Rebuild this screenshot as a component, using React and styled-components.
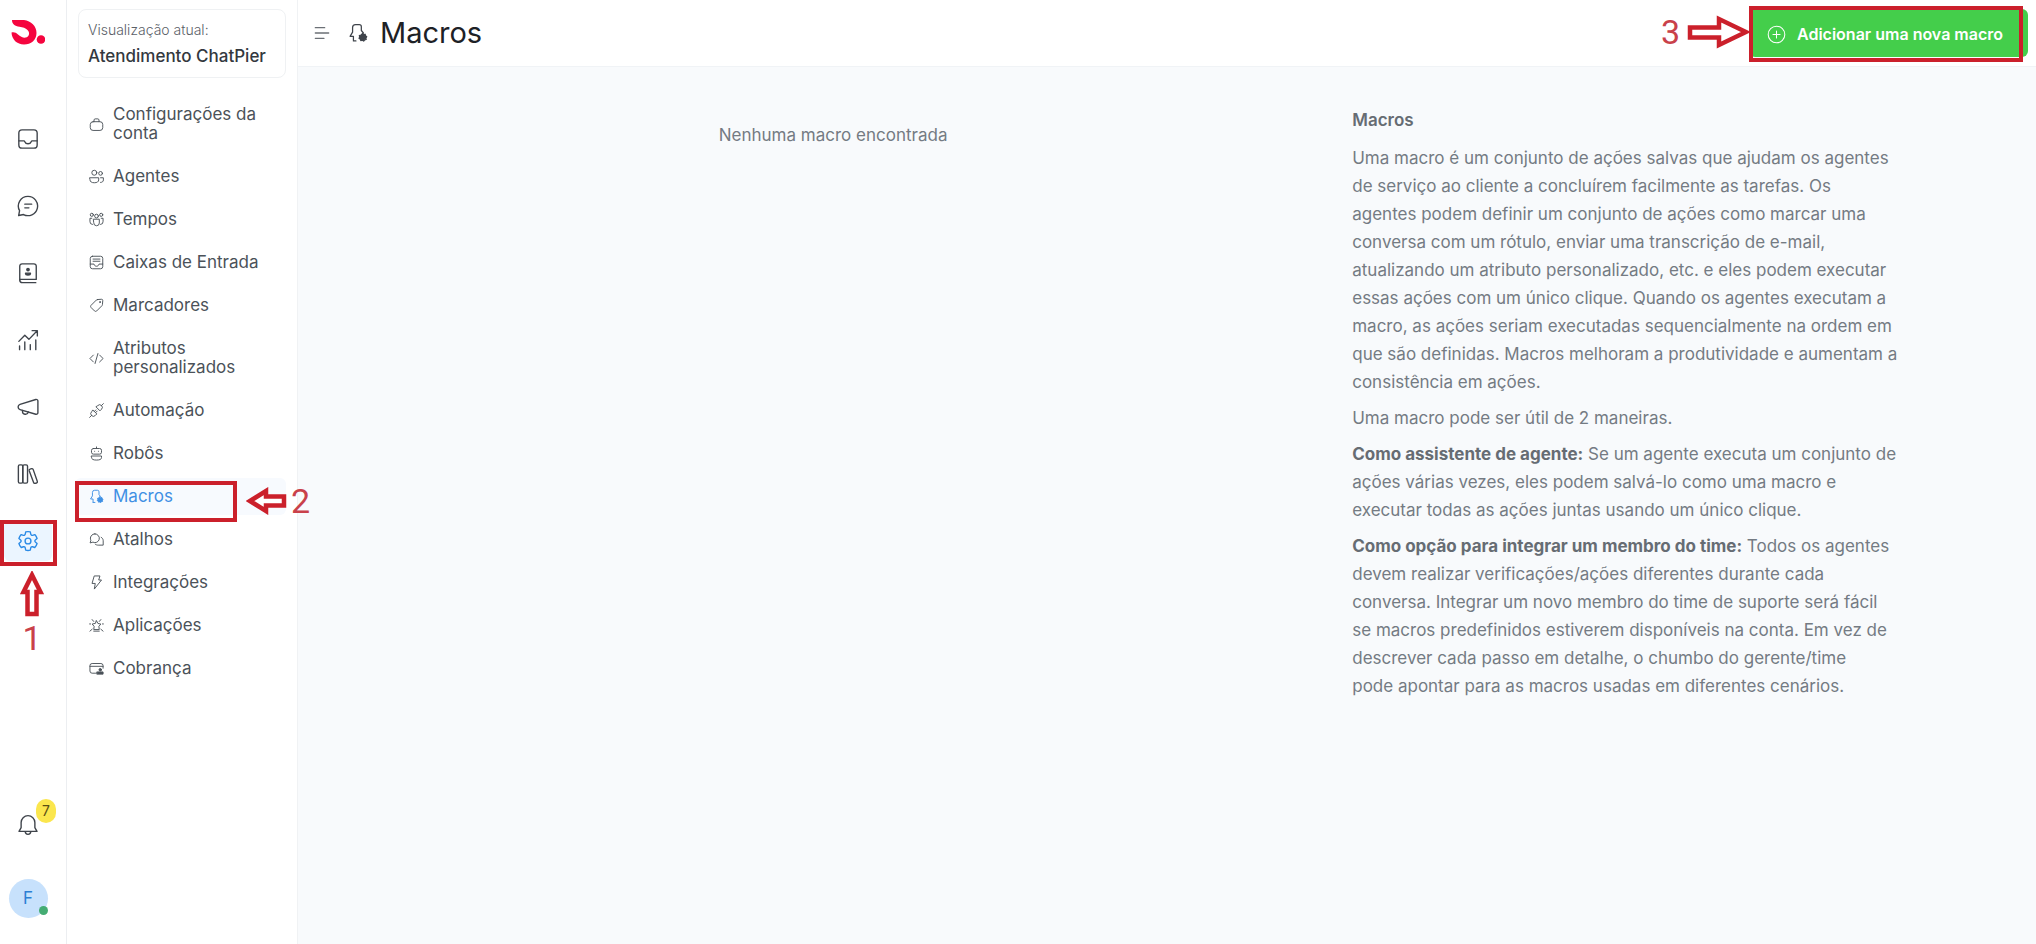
import React from "react";
import styled, { createGlobalStyle } from "styled-components";

const GlobalStyle = createGlobalStyle`
  *, *::before, *::after { box-sizing: border-box; }
  body {
    margin: 0;
    background: #f8fafc;
    color: #3c4858;
    font-family: Inter, "Liberation Sans", sans-serif;
    font-size: 17px;
  }
  a { color: inherit; text-decoration: none; }
  button { font: inherit; cursor: pointer; }
`;

const RED = "#cb202b";

const Shell = styled.div`
  display: grid;
  grid-template-columns: 67px 231px minmax(0, 1fr);
  min-height: 100vh;
`;

const Rail = styled.nav`
  display: flex;
  flex-direction: column;
  justify-content: space-between;
  padding: 8px 14px 26px 4px;
  background: #fff;
  border-right: 1px solid #eceef1;
`;

const RailGroup = styled.div`
  display: flex;
  flex-direction: column;
  align-items: center;
  gap: ${(p) => p.$gap}px;
`;

const LogoLink = styled.a`
  display: flex;
  height: 48px;
  align-items: center;
  margin-bottom: 36px;
`;

const RailLink = styled.a`
  position: relative;
  display: flex;
  align-items: center;
  justify-content: center;
  width: 48px;
  height: 40px;
  border-radius: 6px;
  color: ${(p) => (p.$active ? "#2a8ae6" : "#3f444b")};
  background: ${(p) => (p.$active ? "#ebf5ff" : "transparent")};
`;

const Badge = styled.span`
  position: absolute;
  top: -6px;
  right: -4px;
  width: 20px;
  height: 24px;
  border-radius: 10px;
  background: #fbe64d;
  color: #5a4f14;
  font-size: 14px;
  line-height: 24px;
  text-align: center;
`;

const Avatar = styled.button`
  position: relative;
  width: 39px;
  height: 39px;
  padding: 0 0 2px;
  border: 0;
  border-radius: 50%;
  background: #c7e1fc;
  color: #2b7fd4;
`;

const Status = styled.span`
  position: absolute;
  right: 0;
  bottom: 3px;
  width: 9px;
  height: 9px;
  border-radius: 50%;
  background: #44ac73;
`;

const Sidebar = styled.aside`
  padding: 9px 11px;
  background: #fff;
  border-right: 1px solid #f0f2f4;
`;

const AccountCard = styled.div`
  height: 69px;
  margin-bottom: 18px;
  padding: 7px 9px;
  border: 1px solid #eff1f3;
  border-radius: 8px;
  white-space: nowrap;
`;

const AccountLabel = styled.div`
  color: #5b6168;
  font-size: 14px;
  font-weight: 300;
  line-height: 26px;
`;

const AccountName = styled.div`
  color: #33383e;
  font-weight: 500;
  line-height: 26px;
`;

const Menu = styled.ul`
  display: flex;
  flex-direction: column;
  gap: 6px;
  margin: 0 0 0 -3px;
  padding: 0;
  list-style: none;
`;

const MenuLink = styled.a`
  position: relative;
  display: flex;
  align-items: center;
  gap: 9px;
  padding: 9px 8px 9px 14px;
  border-radius: 6px;
  color: ${(p) => (p.$active ? "#3f90e4" : "#4b5259")};
  background: ${(p) => (p.$active ? "#f7fafe" : "transparent")};
  line-height: 19px;
  svg { flex: none; }
`;

const MenuText = styled.span`
  max-width: 160px;
`;

const Main = styled.main`
  min-width: 0;
`;

const Header = styled.header`
  display: flex;
  align-items: center;
  justify-content: space-between;
  height: 67px;
  padding: 0 8px 0 16px;
  background: #fff;
  border-bottom: 1px solid #f0f3f6;
`;

const HeaderTitle = styled.div`
  display: flex;
  align-items: center;
  color: #3f444b;
`;

const MenuToggle = styled.button`
  display: flex;
  margin-right: 18px;
  padding: 0;
  border: 0;
  background: none;
  color: #6b7076;
`;

const Title = styled.h1`
  margin: 0 0 0 12px;
  color: #1d2126;
  font-size: 29px;
  font-weight: 400;
  line-height: 36px;
`;

const AddButton = styled.button`
  position: relative;
  display: flex;
  align-items: center;
  gap: 11px;
  height: 48px;
  padding: 2px 25px 0 18px;
  border: 0;
  border-radius: 6px;
  background: #44ce4b;
  color: #fff;
  font-size: 16px;
  font-weight: 600;
  white-space: nowrap;
`;

const Content = styled.div`
  display: grid;
  grid-template-columns: 610fr 325fr 65fr;
  padding: 39px 20px 39px 16px;
  color: #747b83;
  line-height: 28px;
`;

const Empty = styled.p`
  margin: 15px 0 0;
  text-align: center;
`;

const Help = styled.section`
  p { margin: 0 0 8px; }
  strong { color: #666c73; font-weight: 700; }
`;

const HelpTitle = styled.h2`
  margin: 0 0 10px;
  color: #666c73;
  font-size: 17px;
  font-weight: 600;
  line-height: 28px;
`;

/* Red tutorial marks that lie over the controls they point at. */
const Frame = styled.span`
  position: absolute;
  inset: ${(p) => p.$inset};
  border: 4px solid ${RED};
  pointer-events: none;
`;

const Mark = styled.span`
  position: absolute;
  z-index: 1;
  top: ${(p) => p.$top};
  left: ${(p) => p.$left};
  display: flex;
  flex-direction: ${(p) => p.$dir || "row"};
  align-items: center;
  gap: ${(p) => p.$gap}px;
  color: #c9414a;
  font-family: Roboto, sans-serif;
  font-size: 34px;
  font-weight: 400;
  line-height: 34px;
  pointer-events: none;
  svg { flex: none; }
`;

function Icon({ size = 22, width = 1.5, children }) {
  return (
    <svg width={size} height={size} viewBox="0 0 24 24" fill="none" stroke="currentColor"
      strokeWidth={width} strokeLinecap="round" strokeLinejoin="round" aria-hidden="true">
      {children}
    </svg>
  );
}

const glyphs = {
  inbox: <><rect x="2" y="2" width="20" height="20" rx="3.5" /><path d="M2 14h5.5c.5 0 .8.4 1 .9a3.8 3.8 0 0 0 7 0c.2-.5.5-.9 1-.9H22" /></>,
  chat: <><path d="M12 1.500a10.500 10.500 0 1 1-4.900 19.800L1.800 22.400l1-5.300A10.500 10.500 0 0 1 12 1.500Z" /><path d="M8.500 10h7.500M8.500 14h4.500" /></>,
  contacts: <><path d="M3 19.500V4.500A2.500 2.500 0 0 1 5.500 2h13A2.500 2.500 0 0 1 21 4.500V19H3.500" /><path d="M3 19.500A3 3 0 0 0 6 22.500h14.500" /><circle cx="12" cy="8.300" r="1.300" fill="currentColor" /><path d="M9.300 12.200h5.400c0 1.400-1 2-2.700 2s-2.700-.6-2.700-2Z" fill="currentColor" /></>,
  reports: <><path d="M2 13.500l6.500-6.700 4.500 4.500L22 2M16.500 1.800H22.200V7.500" /><path d="M2.800 18.500v4M8.500 14v8.500M14.500 17v5.500M20.500 12v10.500" /></>,
  megaphone: <><path d="M20.500 3.800 3.300 9.200C2 9.600 1.200 10.700 1.200 12s.8 2.400 2.100 2.800l17.200 5.100c1.200.3 2.300-.5 2.300-1.700V5.500c0-1.200-1.100-2-2.300-1.700Z" /><path d="M6 15.800v.7a3.200 3.200 0 0 0 6.300 1" /></>,
  library: <><rect x="1.500" y="2" width="4.800" height="20" rx="1.500" /><rect x="6.300" y="2" width="5.200" height="20" rx="1.500" /><path d="m14.200 6.700 1.800-.5c.8-.2 1.500.2 1.700 1l4.500 13c.2.700-.2 1.400-.9 1.600l-1.500.4c-.8.2-1.500-.2-1.700-.9L13.300 8.400c-.2-.8.100-1.500.9-1.700Z" /></>,
  gear: <><path d="M12 1.800c.9 0 1.700.1 2.500.3l.5 2.500c.2 1 1.100 1.500 2 1.200l2.400-.8a10.500 10.500 0 0 1 2.500 4.300L20 11c-.7.600-.7 1.500 0 2.100l1.900 1.700a10.500 10.500 0 0 1-2.500 4.300l-2.400-.8c-.9-.3-1.800.2-2 1.200l-.5 2.500a10.600 10.600 0 0 1-5 0L9 19.500c-.2-1-1.100-1.500-2-1.200l-2.400.8a10.500 10.500 0 0 1-2.500-4.300L4 13.100c.7-.6.700-1.500 0-2.100L2.100 9.300A10.500 10.500 0 0 1 4.600 5l2.400.8c.9.300 1.800-.2 2-1.200l.5-2.500c.8-.2 1.600-.3 2.500-.3Z" /><circle cx="12" cy="12" r="3.200" /></>,
  bell: <path d="M12 1.800a7.500 7.500 0 0 0-7.500 7.500v5.500L2.200 19h19.600l-2.300-4.200V9.300A7.500 7.500 0 0 0 12 1.800ZM9 19.200a3 3 0 0 0 6 0" />,
  briefcase: <><rect x="2" y="7.500" width="20" height="14" rx="4.500" /><path d="M8 7.500V4.800c0-1 .8-1.800 1.800-1.800h4.400c1 0 1.800.8 1.800 1.800v2.700" /></>,
  people: <><circle cx="8.500" cy="6" r="4" /><circle cx="18.500" cy="7" r="3" /><path d="M1.500 14h14v3.500c0 3-2.800 4.500-7 4.500s-7-1.500-7-4.500ZM18.500 14H23v3.500c0 2.700-2 4-4.500 4" /></>,
  team: <><circle cx="12" cy="6.500" r="3" /><circle cx="4.500" cy="4.500" r="2.500" /><circle cx="19.500" cy="4.500" r="2.500" /><path d="M7.500 11.500h9v6a4.500 4.500 0 0 1-9 0ZM4.500 10H1.500V15a4.500 4.500 0 0 0 4 5M19.500 10h3V15a4.500 4.500 0 0 1-4 5" /></>,
  mailInbox: <><rect x="2" y="2" width="20" height="20" rx="3.500" /><path d="M6.500 6.500h11M6.500 10h11M2 14.500h6c.5 2.300 2 3.500 4 3.500s3.500-1.200 4-3.500h6" /></>,
  tag: <><path d="M13.500 2.500 20 2a2 2 0 0 1 2 2l-.5 6.500c0 .7-.3 1.300-.8 1.800l-8.400 8.400c-1 1-2.600 1-3.500 0l-5.500-5.500c-1-1-1-2.500 0-3.500l8.400-8.400c.5-.5 1.100-.8 1.800-.8Z" /><circle cx="17.500" cy="6.500" r=".8" /></>,
  code: <path d="M7 6.500 1.500 12 7 17.500M17 6.500l5.500 5.500-5.500 5.500M14.300 4 9.700 20" />,
  plug: <path d="M23 1 19.800 4.200M11.500 6.500l6 6 2.500-2.500a4.200 4.200 0 0 0-6-6ZM1 23l3.200-3.200M6.500 11.500l6 6-2.500 2.500a4.200 4.200 0 0 1-6-6ZM8.500 13.500l2.500-2.500M10.500 15.500l2.500-2.500" />,
  bot: <><rect x="4" y="4" width="16" height="9" rx="3" /><path d="M12 4V1.500M9 8.500h.1M15 8.500h.1M4 16h16v2.500c0 3-3 4-8 4s-8-1-8-4Z" /></>,
  macros: <><path d="M6.500 21V16H2.500L5.500 11V5.500A3.500 3.500 0 0 1 9 2h4.500A2.500 2.500 0 0 1 16 4.500V9l2.500 3M6.500 21.500h3" /><path d="m17.500 12.500 1.200 1.300 1.800-.3.500 1.800 1.500 1.200-1 1.500.3 1.800-1.800.4-1.200 1.500-1.600-1-1.800.5-.6-1.800-1.600-1 .9-1.600-.5-1.800 1.900-.5Z" fill="currentColor" /></>,
  chats: <><path d="M9.500 3a7 7 0 1 1-3.200 13.200L1.800 17.500 3 13.200A7 7 0 0 1 9.500 3Z" /><path d="M10 19.500c1.300 1.100 3 1.500 4.700 1.500h8V14c0-2.500-1.200-4.500-3.200-5.500" /></>,
  flash: <path d="M9 1.500h8.500L15.500 8H20L8.500 22.500l1.500-9H5.500Z" />,
  apps: <><path d="m12 4.500 2.300 4.200 4.700 1-3.200 3.600.6 5.200H7.600l.6-5.200L5 9.700l4.700-1ZM5 2.500l2.500 3M19 2.500l-2.500 3M1 9.500h1.500M23 9.500h-1.500M1.500 21l3.500-3M22.500 21 19 18M7.600 21h8.800" /></>,
  billing: <><path d="M10.500 19.500H5A3.500 3.500 0 0 1 1.500 16V7.500A3.500 3.500 0 0 1 5 4h14a3.500 3.500 0 0 1 3.500 3.500v4M1.500 8.500h21" /><path d="M13 17.500h9.500v3.500H13Z" fill="currentColor" /><circle cx="18" cy="14" r="2" fill="currentColor" /></>,
  lines: <path d="M2 4h14M2 12h20M2 20h13" />,
  add: <><circle cx="12" cy="12" r="10.500" /><path d="M12 7.500v9M7.500 12h9" /></>,
};

function ArrowShape({ width, height, d }) {
  return (
    <svg width={width} height={height} viewBox={`0 0 ${width} ${height}`} fill="#fff"
      stroke={RED} strokeWidth="4.500" aria-hidden="true">
      <path d={d} />
    </svg>
  );
}

const railItems = [
  ["Caixa de entrada", "inbox"],
  ["Conversas", "chat"],
  ["Contatos", "contacts"],
  ["Relatórios", "reports"],
  ["Campanhas", "megaphone"],
  ["Central de ajuda", "library"],
];

const menuItems = [
  ["Configurações da conta", "briefcase"],
  ["Agentes", "people"],
  ["Tempos", "team"],
  ["Caixas de Entrada", "mailInbox"],
  ["Marcadores", "tag"],
  ["Atributos personalizados", "code"],
  ["Automação", "plug"],
  ["Robôs", "bot"],
  ["Macros", "macros"],
  ["Atalhos", "chats"],
  ["Integrações", "flash"],
  ["Aplicações", "apps"],
  ["Cobrança", "billing"],
];

export default function App() {
  return (
    <Shell>
      <GlobalStyle />
      <Rail>
        <RailGroup $gap={27}>
          <LogoLink href="#" aria-label="Início">
            <svg width="34" height="26" viewBox="0 0 34 26" fill="#f5053f" aria-hidden="true">
              <path d="M1 1H13C20 2 25.500 7 25.500 14 25.500 21 20 25.500 13 25.500 6 25.500 .8 20.500.5 13.500 3 13 5 13.500 7 15.500 9.500 18 12.500 19 15 18.500 18.500 17.500 19 13.500 16.500 11 14.500 9 12 8.300 8.500 7.800 4 7.200 1 5 1 1Z" />
              <circle cx="30" cy="20.500" r="4.300" />
            </svg>
          </LogoLink>
          {railItems.map(([label, glyph]) => (
            <RailLink key={label} href="#" aria-label={label}>
              <Icon>{glyphs[glyph]}</Icon>
            </RailLink>
          ))}
          <RailLink href="#" aria-label="Configurações" $active>
            <Icon>{glyphs.gear}</Icon>
            <Frame $inset="-1px -5px -5px -4px" />
            <Mark $top="50px" $left="16px" $dir="column" $gap={4}>
              <ArrowShape width={24} height={46} d="M12 4 20.500 21H16.500V43H7.500V21H3.500Z" />
              1
            </Mark>
          </RailLink>
        </RailGroup>
        <RailGroup $gap={34}>
          <RailLink href="#" aria-label="Notificações">
            <Icon>{glyphs.bell}</Icon>
            <Badge>7</Badge>
          </RailLink>
          <Avatar type="button">F<Status /></Avatar>
        </RailGroup>
      </Rail>

      <Sidebar>
        <AccountCard>
          <AccountLabel>Visualização atual:</AccountLabel>
          <AccountName>Atendimento ChatPier</AccountName>
        </AccountCard>
        <Menu>
          {menuItems.map(([label, glyph]) => {
            const active = label === "Macros";
            return (
              <li key={label}>
                <MenuLink href="#" $active={active}>
                  <Icon size={15}>{glyphs[glyph]}</Icon>
                  <MenuText>{label}</MenuText>
                  {active && (
                    <>
                      <Frame $inset="3px 49px -7px 0" />
                      <Mark $top="6px" $left="171px" $gap={4}>
                        <ArrowShape width={41} height={28} d="M4 14 20 4V9.500H38V18.500H20V24Z" />
                        2
                      </Mark>
                    </>
                  )}
                </MenuLink>
              </li>
            );
          })}
        </Menu>
      </Sidebar>

      <Main>
        <Header>
          <HeaderTitle>
            <MenuToggle type="button" aria-label="Alternar menu">
              <Icon size={16} width={2}>{glyphs.lines}</Icon>
            </MenuToggle>
            <Icon size={20}>{glyphs.macros}</Icon>
            <Title>Macros</Title>
          </HeaderTitle>
          <AddButton type="button">
            <Icon size={19} width={1.3}>{glyphs.add}</Icon>
            Adicionar uma nova macro
            <Frame $inset="-3px 5px -5px 0" />
            <Mark $top="6px" $left="-88px" $gap={7}>
              3
              <ArrowShape width={63} height={34} d="M3 12.500H32V4L59 17 32 30V22.500H3Z" />
            </Mark>
          </AddButton>
        </Header>
        <Content>
          <Empty>Nenhuma macro encontrada</Empty>
          <Help>
            <HelpTitle>Macros</HelpTitle>
            <p>
              Uma macro é um conjunto de ações salvas que ajudam os agentes de serviço ao cliente a
              concluírem facilmente as tarefas. Os<br />agentes podem definir um conjunto de ações
              como marcar uma conversa com um rótulo, enviar uma transcrição de e-mail, atualizando
              um atributo personalizado, etc. e eles podem executar essas ações com um único clique.
              Quando os agentes executam a macro, as ações seriam executadas sequencialmente na
              ordem em que são definidas. Macros melhoram a produtividade e aumentam a consistência
              em ações.
            </p>
            <p>Uma macro pode ser útil de 2 maneiras.</p>
            <p>
              <strong>Como assistente de agente:</strong> Se um agente executa um conjunto de ações
              várias vezes, eles podem salvá-lo como uma macro e executar todas as ações juntas
              usando um único clique.
            </p>
            <p>
              <strong>Como opção para integrar um membro do time:</strong> Todos os agentes devem
              realizar verificações/ações diferentes durante cada conversa. Integrar um novo membro
              do time de suporte será fácil<br />se macros predefinidos estiverem disponíveis na
              conta. Em vez de descrever cada passo em detalhe, o chumbo do gerente/time<br />pode
              apontar para as macros usadas em diferentes cenários.
            </p>
          </Help>
        </Content>
      </Main>
    </Shell>
  );
}
